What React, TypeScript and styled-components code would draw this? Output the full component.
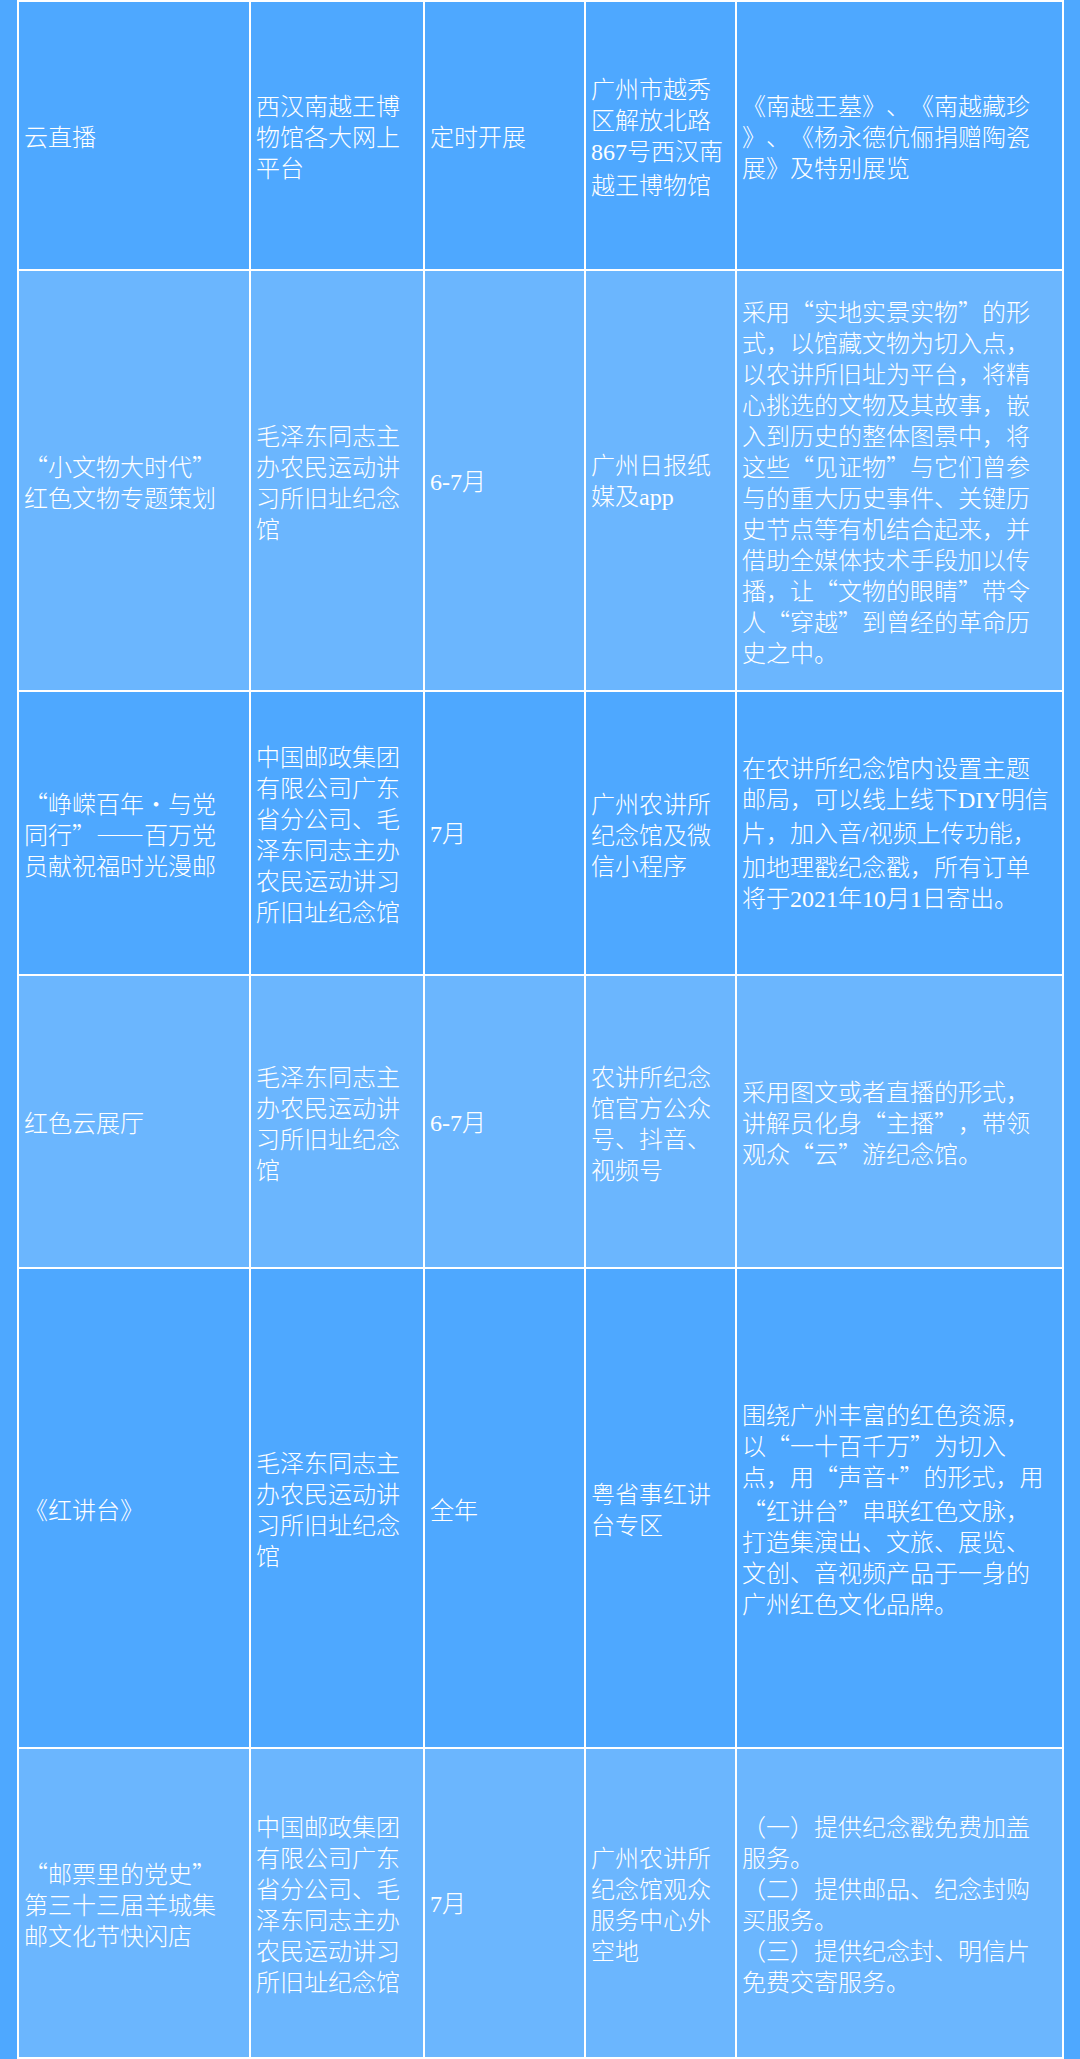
import React from 'react';
import styled, { createGlobalStyle } from 'styled-components';

const GlobalStyle = createGlobalStyle`
  html, body {
    margin: 0;
    padding: 0;
    background: #4ea8ff;
  }
  * {
    box-sizing: border-box;
  }
`;

// column widths include the white line on the right of each cell
const columns = [
  { width: 232, padRight: 18 },
  { width: 174, padRight: 8 },
  { width: 161, padRight: 8 },
  { width: 151, padRight: 4 },
  { width: 327, padRight: 12 },
];

const Page = styled.div`
  padding-left: 17px;
  background: #4ea8ff;
  font-family: "Noto Sans CJK SC", "Noto Sans", sans-serif;
  color: #ffffff;
`;

const Table = styled.div`
  width: 1047px;
  border-top: 2px solid #ffffff;
  border-left: 2px solid #ffffff;
`;

const Row = styled.div<{ $height: number; $light: boolean }>`
  display: grid;
  grid-template-columns: ${columns.map((c) => `${c.width}px`).join(' ')};
  height: ${(p) => p.$height}px;
  background: ${(p) => (p.$light ? '#6bb6fe' : '#4ea8ff')};
`;

const Cell = styled.div<{ $padRight: number; $loose?: boolean }>`
  display: flex;
  align-items: center;
  padding: 0 ${(p) => p.$padRight}px 0 5px;
  border-right: 2px solid #ffffff;
  border-bottom: 2px solid #ffffff;
  font-size: 24px;
  font-weight: 300;
  line-height: 31px;
  font-feature-settings: "fwid" 1;
  text-spacing-trim: space-all;
  line-break: ${(p) => (p.$loose ? 'anywhere' : 'normal')};
  overflow: hidden;
`;

const Latin = styled.span`
  font-family: "Liberation Serif", serif;
  font-weight: 400;
  font-feature-settings: normal;
`;

const Lines = styled.div`
  display: flex;
  flex-direction: column;
`;

type Content = string | string[];

interface TableRow {
  height: number;
  cells: Content[];
  loose?: number;
}

const rows: TableRow[] = [
  {
    height: 269,
    loose: 4,
    cells: [
      '云直播',
      '西汉南越王博物馆各大网上平台',
      '定时开展',
      '广州市越秀区解放北路867号西汉南越王博物馆',
      '《南越王墓》、《南越藏珍》、《杨永德伉俪捐赠陶瓷展》及特别展览',
    ],
  },
  {
    height: 421,
    cells: [
      '“小文物大时代”红色文物专题策划',
      '毛泽东同志主办农民运动讲习所旧址纪念馆',
      '6-7月',
      '广州日报纸媒及app',
      '采用“实地实景实物”的形式，以馆藏文物为切入点，以农讲所旧址为平台，将精心挑选的文物及其故事，嵌入到历史的整体图景中，将这些“见证物”与它们曾参与的重大历史事件、关键历史节点等有机结合起来，并借助全媒体技术手段加以传播，让“文物的眼睛”带令人“穿越”到曾经的革命历史之中。',
    ],
  },
  {
    height: 284,
    cells: [
      '“峥嵘百年·与党同行”——百万党员献祝福时光漫邮',
      '中国邮政集团有限公司广东省分公司、毛泽东同志主办农民运动讲习所旧址纪念馆',
      '7月',
      '广州农讲所纪念馆及微信小程序',
      '在农讲所纪念馆内设置主题邮局，可以线上线下DIY明信片，加入音/视频上传功能，加地理戳纪念戳，所有订单将于2021年10月1日寄出。',
    ],
  },
  {
    height: 293,
    cells: [
      '红色云展厅',
      '毛泽东同志主办农民运动讲习所旧址纪念馆',
      '6-7月',
      '农讲所纪念馆官方公众号、抖音、视频号',
      '采用图文或者直播的形式，讲解员化身“主播”，带领观众“云”游纪念馆。',
    ],
  },
  {
    height: 480,
    cells: [
      '《红讲台》',
      '毛泽东同志主办农民运动讲习所旧址纪念馆',
      '全年',
      '粤省事红讲台专区',
      '围绕广州丰富的红色资源，以“一十百千万”为切入点，用“声音+”的形式，用“红讲台”串联红色文脉，打造集演出、文旅、展览、文创、音视频产品于一身的广州红色文化品牌。',
    ],
  },
  {
    height: 310,
    cells: [
      '“邮票里的党史”第三十三届羊城集邮文化节快闪店',
      '中国邮政集团有限公司广东省分公司、毛泽东同志主办农民运动讲习所旧址纪念馆',
      '7月',
      '广州农讲所纪念馆观众服务中心外空地',
      ['（一）提供纪念戳免费加盖服务。', '（二）提供邮品、纪念封购买服务。', '（三）提供纪念封、明信片免费交寄服务。'],
    ],
  },
];

// chinese quotes may break like brackets when they touch ideographs
const CJK = '\u4e00-\u9fff';
const allowQuoteBreaks = (text: string) =>
  text
    .replace(new RegExp(`”(?=[${CJK}])`, 'g'), '”\u200B')
    .replace(new RegExp(`(?<=[${CJK}])“`, 'g'), '\u200B“');

// digits and latin letters are set in a serif face, as in the source document
const renderText = (text: string) =>
  allowQuoteBreaks(text)
    .split(/([A-Za-z0-9+\-/]+)/)
    .map((part, i) =>
      i % 2 === 1 ? <Latin key={i}>{part}</Latin> : <React.Fragment key={i}>{part}</React.Fragment>
    );

const App = () => {
  return (
    <Page>
      <GlobalStyle />
      <Table>
        {rows.map((row, r) => (
          <Row key={r} $height={row.height} $light={r % 2 === 1}>
            {row.cells.map((content, c) => (
              <Cell key={c} $padRight={columns[c].padRight} $loose={row.loose === c}>
                {Array.isArray(content) ? (
                  <Lines>
                    {content.map((line, l) => (
                      <div key={l}>{renderText(line)}</div>
                    ))}
                  </Lines>
                ) : (
                  <div>{renderText(content)}</div>
                )}
              </Cell>
            ))}
          </Row>
        ))}
      </Table>
    </Page>
  );
};

export default App;
